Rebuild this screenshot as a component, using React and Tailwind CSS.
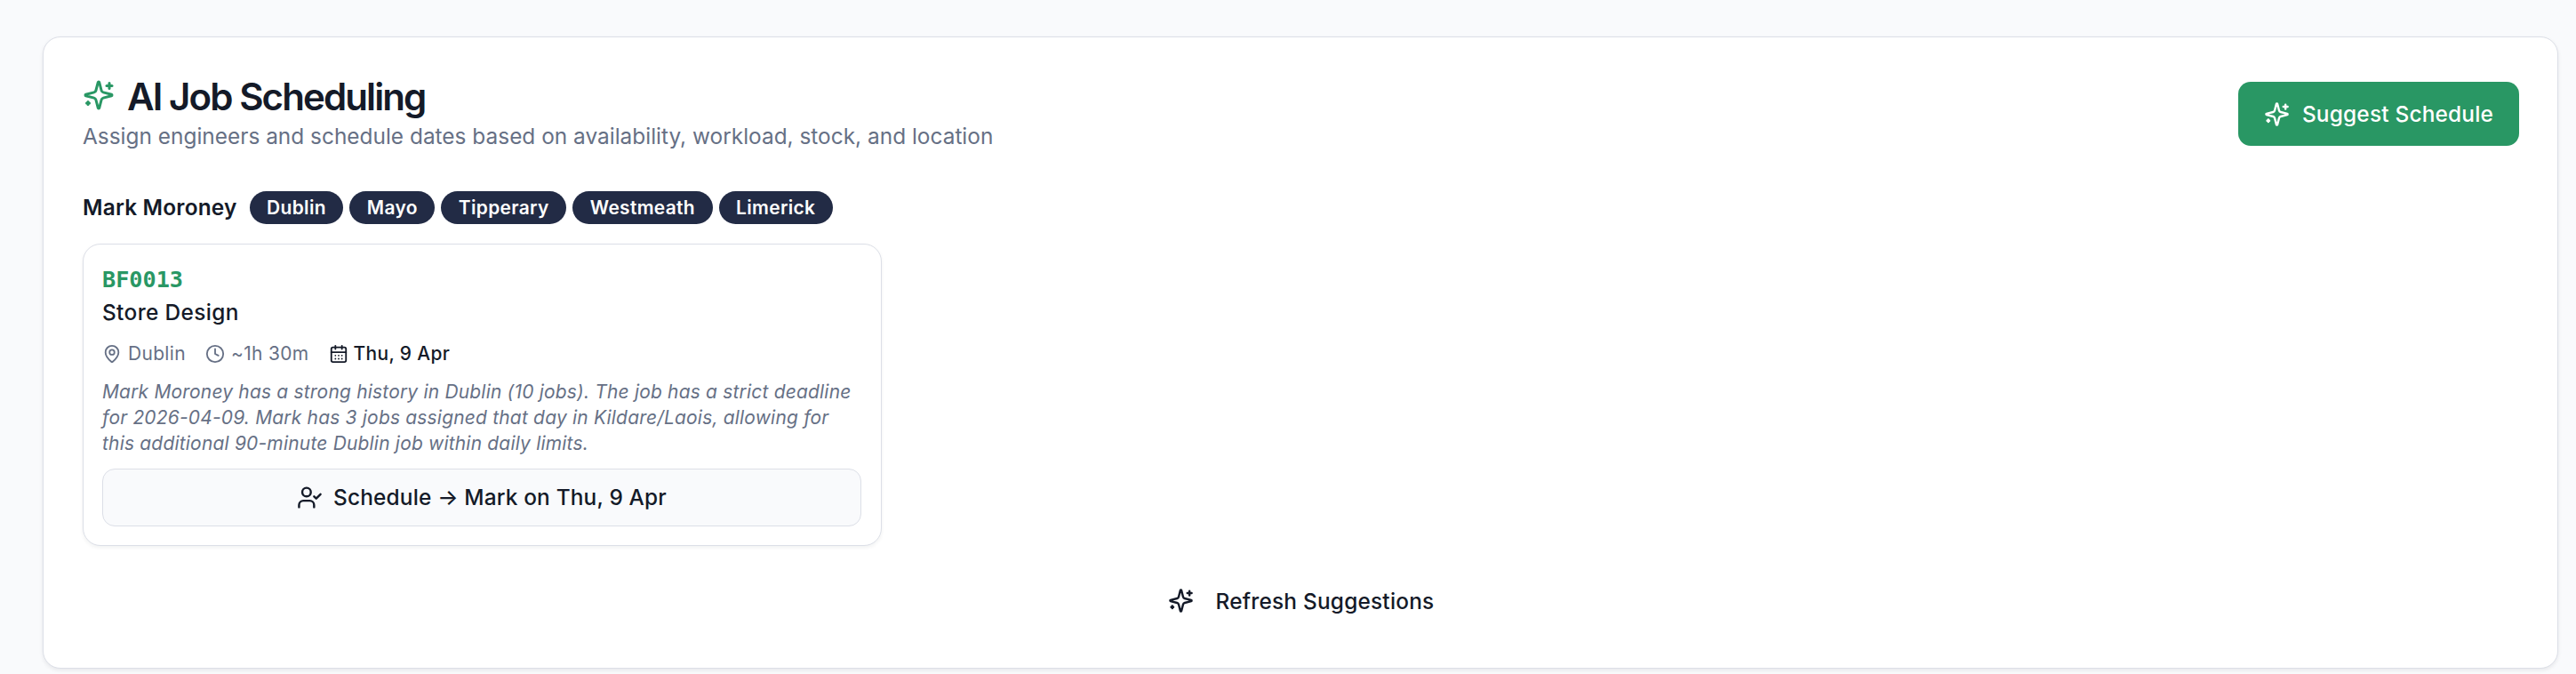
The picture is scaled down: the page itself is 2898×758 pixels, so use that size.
import React from 'react';
import { MapPin, Clock, CalendarDays, UserCheck } from 'lucide-react';

const Sparkles = ({ className }) => (
  <svg
    className={className}
    viewBox="0 0 24 24"
    fill="none"
    stroke="currentColor"
    strokeWidth="2"
    strokeLinecap="round"
    strokeLinejoin="round"
  >
    <path d="M9.937 15.5A2 2 0 0 0 8.5 14.063l-6.135-1.582a.5.5 0 0 1 0-.962L8.5 9.936A2 2 0 0 0 9.937 8.5l1.582-6.135a.5.5 0 0 1 .963 0L14.063 8.5A2 2 0 0 0 15.5 9.937l6.135 1.581a.5.5 0 0 1 0 .964L15.5 14.063a2 2 0 0 0-1.437 1.437l-1.582 6.135a.5.5 0 0 1-.963 0z" />
    <path d="M20 3v4" />
    <path d="M22 5h-4" />
    <path d="M4 17v2" />
    <path d="M5 18H3" />
  </svg>
);

const counties = ['Dublin', 'Mayo', 'Tipperary', 'Westmeath', 'Limerick'];

const jobs = [
  {
    id: 'BF0013',
    title: 'Store Design',
    location: 'Dublin',
    duration: '~1h 30m',
    date: 'Thu, 9 Apr',
    engineer: 'Mark',
    reason:
      'Mark Moroney has a strong history in Dublin (10 jobs). The job has a strict deadline for 2026-04-09. Mark has 3 jobs assigned that day in Kildare/Laois, allowing for this additional 90-minute Dublin job within daily limits.',
  },
];

const JobCard = ({ job }) => (
  <div className="w-[899px] h-[340px] rounded-[20px] border border-[#dcdfe7] bg-white pl-[21px] pr-[22px] pt-[22px] shadow-[0_2px_4px_rgba(20,26,40,0.06)]">
    <div className="h-[36px] leading-[36px] text-[25.2px] font-bold text-[#299764] font-['DejaVu_Sans_Mono',monospace]">
      {job.id}
    </div>
    <div className="h-[36px] leading-[36px] text-[24.4px] font-medium tracking-[0.36px]">{job.title}</div>

    {/* Location, duration and date */}
    <div className="mt-[14px] flex h-[29px] items-center gap-[22px] text-[20.95px] tracking-[0.35px] text-[#667085]">
      <span className="flex items-center gap-[7px]">
        <MapPin className="size-[22px]" />
        {job.location}
      </span>
      <span className="flex items-center gap-[7px]">
        <Clock className="size-[22px]" />
        {job.duration}
      </span>
      <span className="flex items-center gap-[6px] font-medium text-[#141a28]">
        <CalendarDays className="size-[22px]" />
        {job.date}
      </span>
    </div>

    <p className="mt-[14px] text-[20.95px] leading-[29px] tracking-[0.21px] italic text-[#667085]">{job.reason}</p>

    <button className="mt-[14px] flex h-[65px] w-full items-center justify-center gap-[12px] rounded-[14px] border border-[#dcdfe7] bg-[#f9fafc] text-[24.4px] font-medium tracking-[0.17px]">
      <UserCheck className="size-[29px]" />
      <span>Schedule → {job.engineer} on {job.date}</span>
    </button>
  </div>
);

const App = () => {
  return (
    <div className="h-[758px] overflow-hidden bg-[#f9fafc] pt-[41px] pl-[48px] pr-[20px] text-[#141a28] font-['Inter',sans-serif]">
      <div className="h-[711px] rounded-[20px] border border-[#dcdfe7] bg-white pl-[44px] pr-[43px] pt-[43px] shadow-[0_2px_4px_rgba(20,26,40,0.08)]">
        {/* Header */}
        <div className="flex items-center justify-between">
          <div>
            <h2 className="flex h-[44px] items-center gap-[14px] text-[42px] leading-[43px] font-semibold tracking-[-1.9px]">
              <Sparkles className="size-[36px] text-[#299764]" />
              <span className="pt-[2px]">AI Job Scheduling</span>
            </h2>
            <p className="mt-[6px] text-[24.4px] leading-[36px] tracking-[0.01px] text-[#667085]">
              Assign engineers and schedule dates based on availability, workload, stock, and location
            </p>
          </div>
          <button className="flex h-[72px] w-[316px] items-center justify-center gap-[14px] rounded-[14px] bg-[#299764] text-[24.4px] font-medium tracking-[0.2px] text-white">
            <Sparkles className="size-[29px]" />
            <span className="pt-px">Suggest Schedule</span>
          </button>
        </div>

        {/* Engineer and counties */}
        <div className="mt-[44px] flex h-[37px] items-center gap-[14px]">
          <span className="text-[24.4px] font-semibold tracking-[0.2px]">Mark Moroney</span>
          <div className="flex gap-[7px]">
            {counties.map((county) => (
              <span
                key={county}
                className="flex h-[37px] items-center rounded-full bg-[#222b45] px-[19.5px] text-[20.95px] font-semibold tracking-[0.33px] text-white"
              >
                {county}
              </span>
            ))}
          </div>
        </div>

        <div className="mt-[22px]">
          {jobs.map((job) => (
            <JobCard key={job.id} job={job} />
          ))}
        </div>

        <button className="mx-auto mt-[29px] flex h-[65px] items-center gap-[25px] text-[24.4px] font-medium tracking-[0.22px]">
          <Sparkles className="size-[29px]" />
          <span className="pt-px">Refresh Suggestions</span>
        </button>
      </div>
    </div>
  );
};

export default App;
